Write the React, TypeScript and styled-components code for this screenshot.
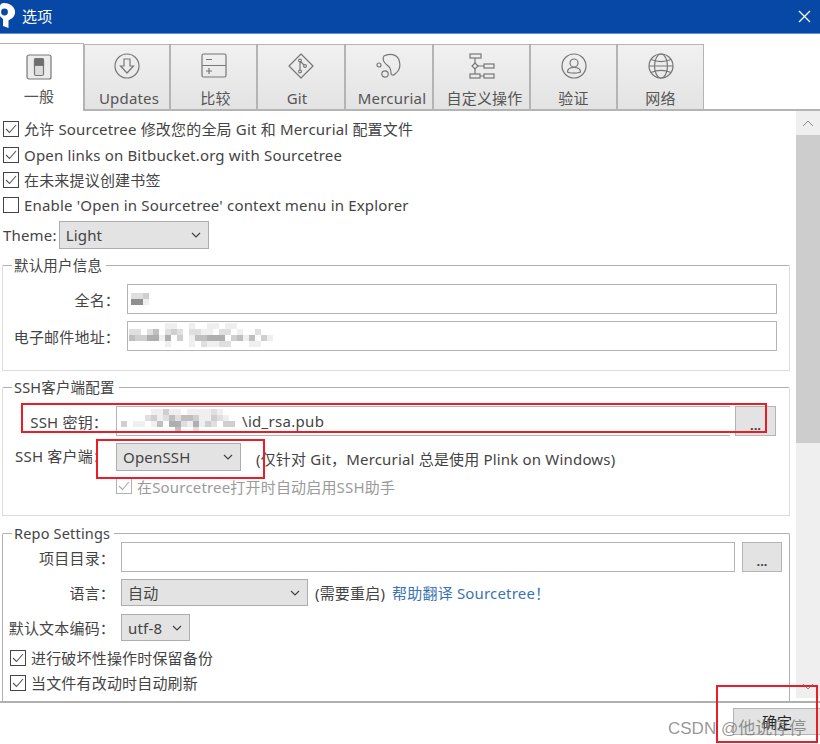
import React from "react";
import styled, { createGlobalStyle } from "styled-components";

const Global = createGlobalStyle`
  html, body { margin: 0; padding: 0; background: #fff; }
  * { box-sizing: border-box; }
  body { font-family: "Noto Sans", "Noto Sans CJK SC", sans-serif; font-size: 15px; color: #444; letter-spacing: 0.18px; }
`;
const Page = styled.div`
  position: relative; width: 820px; height: 744px; overflow: hidden; background: #fff;
  display: flex; flex-direction: column;
`;
const TitleBar = styled.div`
  height: 34px; flex: none; background: #0747a6; border-bottom: 1px solid #5f8fd6;
  display: flex; align-items: center; justify-content: space-between; color: #fff;
  padding: 0 9px 0 0;
`;
const TitleLeft = styled.div`
  display: flex; align-items: center; gap: 6px; font-size: 15px; height: 100%; padding-bottom: 3px;
`;
const TabStrip = styled.div`
  flex: none; height: 77px; padding-top: 10px; display: flex; align-items: flex-end;
  border-bottom: 2px solid #b4b4b4;
`;
const Tab = styled.div<{ $w: number; $active?: boolean }>`
  width: ${(p) => p.$w}px; height: ${(p) => (p.$active ? 68 : 65)}px;
  margin-bottom: ${(p) => (p.$active ? -2 : 0)}px;
  background: ${(p) => (p.$active ? "#fff" : "linear-gradient(#f1f1f1, #e3e3e3)")};
  border: 1px solid #b4b4b4; border-bottom: none; border-left: ${(p) => (p.$active ? "none" : "1px solid #b4b4b4")};
  display: flex; flex-direction: column; align-items: center;
  padding: ${(p) => (p.$active ? "10px 5px 0 0" : "8px 0 0")};
  font-size: 15px; color: #555;
  & > svg { flex: none; display: block; }
`;
const TabLabel = styled.span<{ $active?: boolean; $dx?: number }>`
  margin-top: ${(p) => (p.$active ? 6 : 9)}px; margin-left: ${(p) => p.$dx ?? 0}px; line-height: 20px; white-space: nowrap;
`;
const Body = styled.div`
  flex: 1; min-height: 0; display: flex;
`;
const Content = styled.div`
  width: 796px; flex: none; overflow: hidden; padding-top: 6px;
`;
const Track = styled.div`
  width: 24px; flex: none; background: #efefef; height: 587px; display: flex; flex-direction: column; align-items: center;
`;
const TrackEnd = styled.div`
  height: 24px; flex: none; display: flex; align-items: center; justify-content: center;
`;
const Thumb = styled.div`
  width: 100%; height: 308px; flex: none; background: #cdcdcd;
`;
const TrackGap = styled.div`flex: 1;`;
const CheckRow = styled.label<{ $h?: number; $indent?: number; $muted?: boolean; $mt?: number }>`
  display: flex; align-items: center; height: ${(p) => p.$h ?? 25}px; gap: 5px;
  margin-top: ${(p) => p.$mt ?? 0}px;
  padding-left: ${(p) => p.$indent ?? 3}px; white-space: nowrap;
  color: ${(p) => (p.$muted ? "#9a9a9a" : "#444")};
`;
const Box = styled.span<{ $muted?: boolean }>`
  width: 16px; height: 16px; flex: none; display: flex; align-items: center; justify-content: center;
  border: 1px solid ${(p) => (p.$muted ? "#b0b0b0" : "#444")}; background: #fff;
`;
const ThemeRow = styled.div`
  display: flex; align-items: center; height: 28px; margin-top: 4px; padding-left: 3px; gap: 2px;
`;
const Select = styled.div<{ $w: number; $h?: number }>`
  width: ${(p) => p.$w}px; height: ${(p) => p.$h ?? 28}px; flex: none;
  background: #e3e3e3; border: 1px solid #adadad;
  display: flex; align-items: center; justify-content: space-between; padding: 0 7px 0 6px;
`;
const Group = styled.div<{ $mt: number; $h: number; $open?: boolean }>`
  margin: ${(p) => p.$mt}px 6px 0 2px; height: ${(p) => p.$h}px;
  border: 1px solid ${(p) => (p.$open ? "#b0b0b0" : "#dcdcdc")};
  border-top-color: #b0b0b0; ${(p) => (p.$open ? "border-bottom: none;" : "")}
  border-radius: 2px 2px 0 0; position: relative;
`;
const Legend = styled.div`
  position: absolute; top: -10px; left: 9px; background: #fff; padding: 0 4px 0 2px;
  line-height: 19px; font-size: 14.5px; white-space: nowrap;
`;
const FieldRow = styled.div<{ $mt: number; $label: number; $h?: number; $lift?: number; $pad?: number }>`
  display: flex; align-items: center; margin-top: ${(p) => p.$mt}px; height: ${(p) => p.$h ?? 30}px;
  & > label {
    width: ${(p) => p.$label}px; flex: none; text-align: right; white-space: nowrap;
    padding-right: ${(p) => p.$pad ?? 7}px; padding-bottom: ${(p) => (p.$lift ?? 0) * 2}px;
  }
`;
const Input = styled.div<{ $w: number; $noSides?: boolean }>`
  width: ${(p) => p.$w}px; height: 30px; flex: none; background: #fff;
  border: 1px solid #b4b4b4; display: flex; align-items: center;
  ${(p) => (p.$noSides ? "border-right: none;" : "")}
`;
const Dots = styled.button<{ $ml: number; $w: number }>`
  margin-left: ${(p) => p.$ml}px; width: ${(p) => p.$w}px; height: 30px; flex: none;
  background: #e3e3e3; border: 1px solid #b4b4b4; padding: 7px 0 0; font: 700 13px "Noto Sans", sans-serif; color: #444;
  line-height: 20px;
`;
const Note = styled.span<{ $ml: number; $drop?: number }>`
  margin-left: ${(p) => p.$ml}px; white-space: nowrap; padding-top: ${(p) => (p.$drop ?? 0) * 2}px;
`;
const PathTail = styled.span`
  margin-left: 125px; letter-spacing: 0.3px; white-space: nowrap;
`;
const HelpLink = styled.a`color: #3a74b4; margin-left: 7px; white-space: nowrap;`;
const Footer = styled.div`
  height: 43px; flex: none; border-top: 2px solid #b0b0b0; display: flex; justify-content: flex-end;
  padding-top: 5px; margin-top: -1px; background: #fff; position: relative;
`;
const OkButton = styled.button`
  width: 87px; height: 27px; background: #e3e3e3; border: 1px solid #b4b4b4; border-right: none;
  font: 15px "Noto Sans CJK SC", sans-serif; color: #222; padding: 0;
`;
const RedBox = styled.div<{ $x: number; $y: number; $w: number; $h: number }>`
  position: absolute; left: ${(p) => p.$x}px; top: ${(p) => p.$y}px; width: ${(p) => p.$w}px; height: ${(p) => p.$h}px;
  border: 2px solid #ed1c24; pointer-events: none;
`;
const Watermark = styled.div`
  position: absolute; left: 668px; top: 714px; font: 17px "Liberation Sans", "Noto Sans CJK SC", sans-serif;
  color: rgba(110,110,110,0.72); white-space: nowrap; letter-spacing: 0;
`;
const Mosaic = styled.svg<{ $x: number; $y: number }>`
  position: absolute; left: ${(p) => p.$x}px; top: ${(p) => p.$y}px;
`;

const Check = ({ muted }: { muted?: boolean }) => (
  <svg width="12" height="10" viewBox="0 0 12 10" fill="none">
    <path d="M1 5l3.5 3.5L11 1" stroke={muted ? "#a8a8a8" : "#555"} strokeWidth="1.1" />
  </svg>
);
const Chevron = () => (
  <svg width="10" height="6" viewBox="0 0 10 6" fill="none">
    <path d="M1 1l4 4 4-4" stroke="#444" strokeWidth="1.2" />
  </svg>
);
const I = { fill: "none", stroke: "#777", strokeWidth: 1.2 };
const GeneralIcon = () => (
  <svg width="26" height="26" viewBox="0 0 26 26" {...I}>
    <rect x="1" y="1" width="24" height="24" rx="2" fill="#ececec" />
    <rect x="8.500" y="4.500" width="9" height="17" rx="1.5" fill="#dcdcdc" />
    <path d="M8.500 6a1.500 1.500 0 011.500-1.500h6A1.500 1.500 0 0117.500 6v5.500h-9z" fill="#6d6d6d" />
  </svg>
);
const UpdatesIcon = () => (
  <svg width="26" height="26" viewBox="0 0 26 26" {...I}>
    <circle cx="13" cy="13" r="12" />
    <path d="M10 6h6v7h3.500L13 20l-6.500-7H10z" />
  </svg>
);
const DiffIcon = () => (
  <svg width="26" height="26" viewBox="0 0 26 26" {...I}>
    <rect x="1" y="1" width="24" height="23" rx="1.5" />
    <path d="M1 12.500h24M5 6.500h6M5 18h6M8 15v6" />
  </svg>
);
const GitIcon = () => (
  <svg width="26" height="26" viewBox="0 0 26 26" {...I}>
    <path d="M13 1l12 12-12 12L1 13z" strokeLinejoin="round" />
    <path d="M12 7v12M12 8l5 5" />
    <circle cx="12" cy="7.500" r="1.400" fill="#fff" />
    <circle cx="17" cy="13" r="1.400" fill="#fff" />
    <circle cx="12" cy="18.500" r="1.400" fill="#fff" />
  </svg>
);
const HgIcon = () => (
  <svg width="26" height="26" viewBox="0 0 26 26" {...I}>
    <path d="M8 3c5-3 13-2 15 4 2 6 0 11-4 14-2 2-4 1-4-1 0-4-1-6-4-8-3-2-5-6-3-9z" />
    <circle cx="3" cy="12" r="2" />
    <circle cx="9" cy="21" r="3.200" />
  </svg>
);
const CustomIcon = () => (
  <svg width="26" height="26" viewBox="0 0 26 26" {...I}>
    <rect x="1" y="1" width="11" height="4" />
    <rect x="15" y="11" width="10" height="4" />
    <rect x="1" y="21" width="10" height="4" />
    <rect x="15" y="21" width="10" height="4" />
    <path d="M6 5v5M6 16v5M9 13h6M11 23h4" />
    <path d="M6 10l3 3-3 3-3-3z" />
  </svg>
);
const AuthIcon = () => (
  <svg width="26" height="26" viewBox="0 0 26 26" {...I}>
    <circle cx="13" cy="13" r="12" />
    <circle cx="13" cy="10" r="4" />
    <path d="M6.500 19c0-3 2.500-4.500 6.500-4.500s6.500 1.500 6.500 4.500c-2 1.400-11 1.400-13 0z" />
  </svg>
);
const NetIcon = () => (
  <svg width="26" height="26" viewBox="0 0 26 26" {...I}>
    <circle cx="13" cy="13" r="12" />
    <ellipse cx="13" cy="13" rx="6.500" ry="12" />
    <path d="M3 6.500c6 2.500 14 2.500 20 0M3 19.500c6-2.500 14-2.500 20 0M1 13h24" />
  </svg>
);
const Logo = () => (
  <svg width="16" height="28" viewBox="0 0 16 28">
    <path d="M1 3C3 1 8 2 11 4c3.500 2.500 5 6 3.500 10-1 2.500-3.500 4-6 5.500V27L3 25v-7C0 16-1 14-1 10-1 7 0 4 1 3z" fill="#fff" />
    <circle cx="4.500" cy="11" r="3.400" fill="#0747a6" />
  </svg>
);

const drawGrid = (rows: string[], s: number) =>
  rows.flatMap((row, r) =>
    row.split("").map((ch, c) => {
      const shade = 255 - Number(ch) * 16;
      return <rect key={`${r}-${c}`} x={c * s} y={r * s} width={s} height={s} fill={`rgb(${shade},${shade},${shade})`} />;
    })
  );

const nameGrid = ["223", "771"];
const mailGrid = [
  "0000001100100110110000000",
  "2202402320221102201002000",
  "4335515030144555034140310",
  "0000001000102112200011000",
];
const sshGrid = [
  "00000113110111121000",
  "00002312424431132100",
  "30110140552151320330",
  "00000000040020000000",
];

const tabs = [
  { w: 86, dx: 4, label: "Updates", icon: <UpdatesIcon /> },
  { w: 87, dx: 4, label: "比较", icon: <DiffIcon /> },
  { w: 88, dx: -8, label: "Git", icon: <GitIcon /> },
  { w: 88, dx: 6, label: "Mercurial", icon: <HgIcon /> },
  { w: 97, dx: 6, label: "自定义操作", icon: <CustomIcon /> },
  { w: 87, dx: 0, label: "验证", icon: <AuthIcon /> },
  { w: 87, dx: 0, label: "网络", icon: <NetIcon /> },
];

export default function App() {
  return (
    <Page>
      <Global />
      <TitleBar>
        <TitleLeft>
          <Logo />
          <span>选项</span>
        </TitleLeft>
        <svg width="13" height="13" viewBox="0 0 13 13" stroke="#fff" strokeWidth="1.3">
          <path d="M1 1l11 11M12 1L1 12" />
        </svg>
      </TitleBar>
      <TabStrip>
        <Tab $w={84} $active>
          <GeneralIcon />
          <TabLabel $active>一般</TabLabel>
        </Tab>
        {tabs.map((t) => (
          <Tab key={t.label} $w={t.w}>
            {t.icon}
            <TabLabel $dx={t.dx}>{t.label}</TabLabel>
          </Tab>
        ))}
      </TabStrip>
      <Body>
        <Content>
          <CheckRow $h={23}><Box><Check /></Box>允许 Sourcetree 修改您的全局 Git 和 Mercurial 配置文件</CheckRow>
          <CheckRow $mt={2}><Box><Check /></Box>Open links on Bitbucket.org with Sourcetree</CheckRow>
          <CheckRow><Box><Check /></Box>在未来提议创建书签</CheckRow>
          <CheckRow><Box />Enable 'Open in Sourcetree' context menu in Explorer</CheckRow>
          <ThemeRow>Theme:<Select $w={150}>Light<Chevron /></Select></ThemeRow>

          <Group $mt={16} $h={106}>
            <Legend>默认用户信息</Legend>
            <FieldRow $mt={18} $label={124}>
              <label>全名：</label>
              <Input $w={650} />
            </FieldRow>
            <FieldRow $mt={7} $label={124}>
              <label>电子邮件地址：</label>
              <Input $w={650} />
            </FieldRow>
          </Group>

          <Group $mt={16} $h={129}>
            <Legend>SSH客户端配置</Legend>
            <FieldRow $mt={18} $label={113} $pad={8}>
              <label>SSH 密钥：</label>
              <Input $w={614} $noSides><PathTail>\id_rsa.pub</PathTail></Input>
              <Dots $ml={5} $w={41}>...</Dots>
            </FieldRow>
            <FieldRow $mt={6} $label={113} $h={29} $pad={8} $lift={1}>
              <label>SSH 客户端：</label>
              <Select $w={125}>OpenSSH<Chevron /></Select>
              <Note $ml={15} $drop={1.5}>(仅针对 Git，Mercurial 总是使用 Plink on Windows)</Note>
            </FieldRow>
            <CheckRow $h={22} $indent={113} $mt={4} $muted><Box $muted><Check muted /></Box>在Sourcetree打开时自动启用SSH助手</CheckRow>
          </Group>

          <Group $mt={17} $h={170} $open>
            <Legend>Repo Settings</Legend>
            <FieldRow $mt={8} $label={118} $pad={6}>
              <label>项目目录：</label>
              <Input $w={614} />
              <Dots $ml={7} $w={40}>...</Dots>
            </FieldRow>
            <FieldRow $mt={7} $label={118} $h={27} $pad={6}>
              <label>语言：</label>
              <Select $w={187} $h={27}>自动<Chevron /></Select>
              <Note $ml={7}>(需要重启)</Note>
              <HelpLink>帮助翻译 Sourcetree！</HelpLink>
            </FieldRow>
            <FieldRow $mt={8} $label={118} $h={27} $pad={6}>
              <label>默认文本编码：</label>
              <Select $w={69} $h={27}>utf-8<Chevron /></Select>
            </FieldRow>
            <CheckRow $indent={7} $mt={4}><Box><Check /></Box>进行破坏性操作时保留备份</CheckRow>
            <CheckRow $indent={7}><Box><Check /></Box>当文件有改动时自动刷新</CheckRow>
          </Group>
        </Content>
        <Track>
          <TrackEnd>
            <svg width="12" height="7" viewBox="0 0 12 7" fill="none"><path d="M1 6l5-5 5 5" stroke="#888" /></svg>
          </TrackEnd>
          <Thumb />
          <TrackGap />
          <TrackEnd>
            <svg width="12" height="7" viewBox="0 0 12 7" fill="none"><path d="M1 1l5 5 5-5" stroke="#888" /></svg>
          </TrackEnd>
        </Track>
      </Body>
      <Footer>
        <OkButton>确定</OkButton>
      </Footer>

      <Mosaic $x={131} $y={293} width="18" height="12" viewBox="0 0 18 12">{drawGrid(nameGrid, 6)}</Mosaic>
      <Mosaic $x={129} $y={323} width="150" height="24" viewBox="0 0 150 24">{drawGrid(mailGrid, 6)}</Mosaic>
      <Mosaic $x={121} $y={409} width="120" height="24" viewBox="0 0 120 24">{drawGrid(sshGrid, 6)}</Mosaic>

      <RedBox $x={21} $y={403} $w={746} $h={30} />
      <RedBox $x={96} $y={439} $w={169} $h={40} />
      <RedBox $x={716} $y={685} $w={102} $h={58} />
      <Watermark>CSDN @他说停停</Watermark>
    </Page>
  );
}
